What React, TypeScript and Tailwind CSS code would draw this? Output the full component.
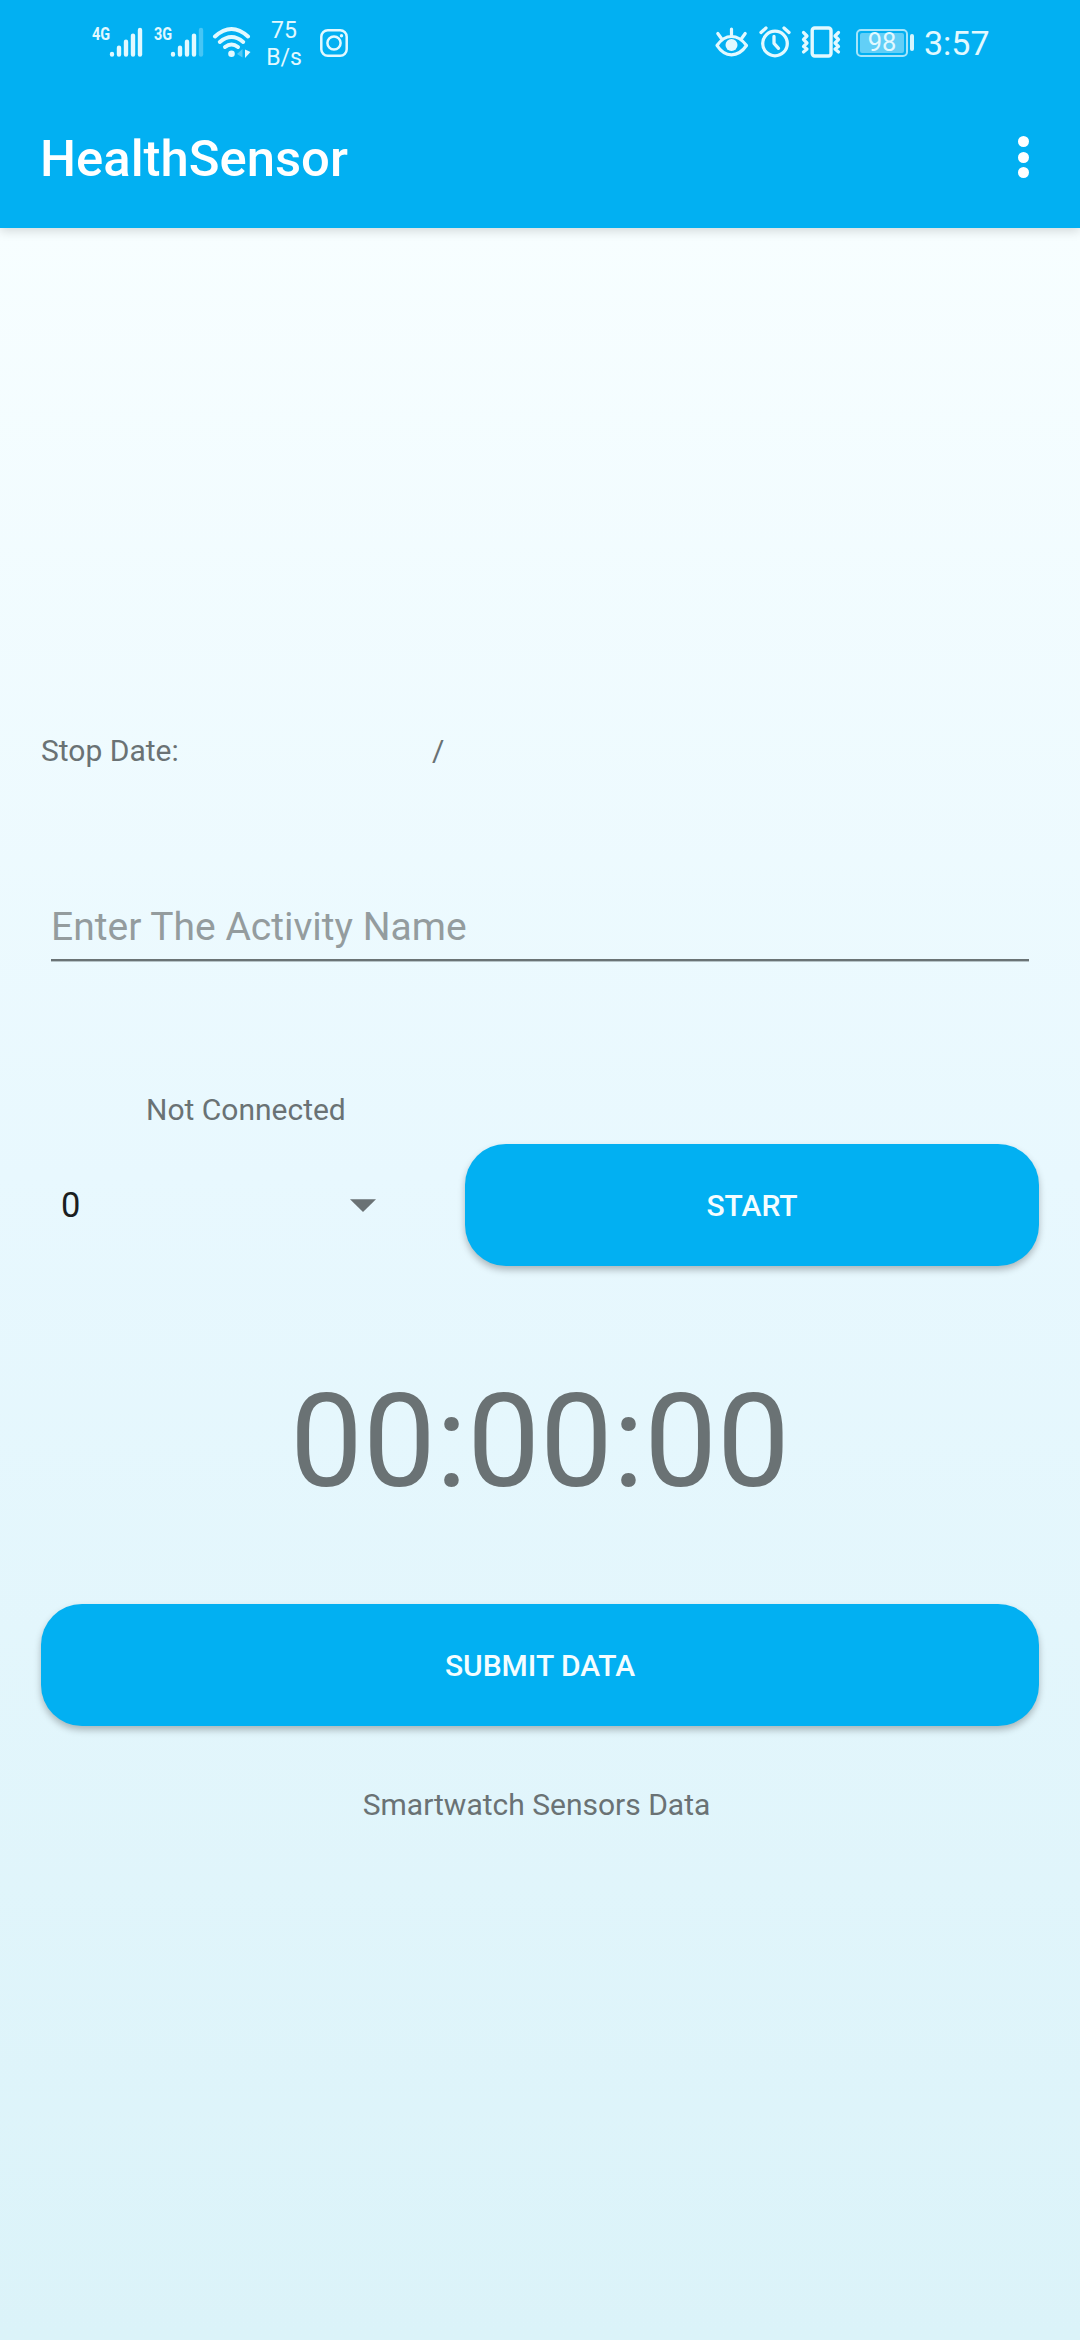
import React from "react";

const ICE = "#e2f9ff";

function SignalBars({ faded = false }: { faded?: boolean }) {
  return (
    <svg className="h-[32px] w-[34px]" viewBox="0 0 34 32" stroke={ICE} strokeWidth="4.4" strokeLinecap="round">
      <path d="M3 28v.6M10 21.800v6.800M17 15.800v12.800M24 9.600v19" />
      <path d="M31 4v24.600" opacity={faded ? 0.3 : 1} />
    </svg>
  );
}

function Wifi() {
  return (
    <svg className="h-[34px] w-[40px]" viewBox="0 0 40 34" fill="none" stroke={ICE} strokeWidth="4" strokeLinecap="round">
      <path d="M3 11.500Q19.500-3.500 36 11.500" />
      <path d="M7.800 17Q19.500 7 31.200 17" />
      <path d="M13 22Q19.500 17 26 22" />
      <circle cx="19.500" cy="28.700" r="3.300" fill={ICE} stroke="none" />
      <path d="M30.500 24v8.500L25 29z" fill={ICE} stroke="none" opacity=".35" />
      <path d="M33 24.500v8.500l5.500-6z" fill={ICE} stroke="none" />
    </svg>
  );
}

function Camera() {
  return (
    <svg className="h-[28px] w-[28px]" viewBox="0 0 28 28" fill="none" stroke={ICE} strokeWidth="2.500">
      <rect x="1.300" y="1.300" width="25.400" height="25.400" rx="6.500" />
      <circle cx="14" cy="14" r="6.600" />
      <circle cx="21.500" cy="6.800" r="1.700" fill={ICE} stroke="none" />
    </svg>
  );
}

function Eye() {
  return (
    <svg className="h-[30px] w-[34px]" viewBox="0 0 34 30" fill="none" stroke={ICE} strokeWidth="3.200" strokeLinecap="round">
      <path d="M2 18.500Q8 9.500 16.500 9.500T31.500 18.500Q25 27.800 16.500 27.800T2 18.500z" strokeLinejoin="round" />
      <circle cx="16.500" cy="18" r="6" fill={ICE} stroke="none" />
      <path d="M16.500 2v6M2.800 6.500l3.600 5M30.200 6.500l-3.600 5" />
    </svg>
  );
}

function Alarm() {
  return (
    <svg className="h-[32px] w-[32px]" viewBox="0 0 32 32" fill="none" stroke={ICE} strokeWidth="3.300" strokeLinecap="round">
      <circle cx="16" cy="17.500" r="12.300" />
      <path d="M15 10.500v6.800l4.500 5" strokeLinejoin="round" />
      <path d="M2 6.500l5-4.500M30 6.500l-5-4.500" />
    </svg>
  );
}

function Vibrate() {
  return (
    <svg className="h-[32px] w-[40px]" viewBox="0 0 40 32" fill="none" stroke={ICE} strokeWidth="3.400" strokeLinecap="round" strokeLinejoin="round">
      <rect x="11.200" y="2" width="18.800" height="28" rx="2.500" />
      <path d="M2.500 6.500l3.500 3.500-3.500 3.500 3.500 3.500-3.500 3.500 3.500 2.500-3.500 3" strokeWidth="3.200" />
      <path d="M37.500 6.500l-3.500 3.500 3.500 3.500-3.500 3.500 3.500 3.500-3.500 2.500 3.500 3" strokeWidth="3.200" />
    </svg>
  );
}

function StatusBar() {
  return (
    <div className="flex h-[84px] items-start text-[#e2f9ff]">
      <span className="mt-[25px] ml-[92px] w-[18px] origin-left scale-x-[.78] text-[18.500px] leading-[18px] font-bold">4G</span>
      <div className="mt-[26px] -ml-px h-[32px]"><SignalBars /></div>
      <span className="mt-[25px] ml-[11px] w-[18px] origin-left scale-x-[.78] text-[18.500px] leading-[18px] font-bold">3G</span>
      <div className="mt-[26px] -ml-[2px] h-[32px]"><SignalBars faded /></div>
      <div className="mt-[25px] ml-[8px]"><Wifi /></div>
      <div className="mt-[17px] ml-[14px] w-[36px] text-center text-[23px] leading-[27px]">
        <div>75</div>
        <div>B/s</div>
      </div>
      <div className="mt-[29px] ml-[18px]"><Camera /></div>
      <div className="mt-[27px] ml-[367px]"><Eye /></div>
      <div className="mt-[26px] ml-[10px]"><Alarm /></div>
      <div className="mt-[26px] ml-[10px]"><Vibrate /></div>
      <div className="mt-[29px] ml-[15px] flex h-[28px] w-[52px] rounded-[5px] border-2 border-[#a5e5fb] p-[2px]">
        <div className="flex flex-1 items-center justify-center rounded-[2px] bg-[#62cff7] text-[25.500px] leading-none">98</div>
      </div>
      <div className="mt-[34px] ml-[2px] h-[17px] w-[4px] rounded-full bg-[#d5f5fe]" />
      <span className="mt-[23px] ml-[10px] text-[34px] leading-[40px]">3:57</span>
    </div>
  );
}

function Toolbar() {
  return (
    <div className="flex h-[144px] items-start justify-between pr-[51px] pl-[40px]">
      <h1 className="mt-[45px] text-[50.800px] leading-[60px] font-medium text-white">HealthSensor</h1>
      <button aria-label="More options" className="mt-[52px] flex flex-col gap-[4.500px]">
        <span className="size-[11px] rounded-full bg-white" />
        <span className="size-[11px] rounded-full bg-white" />
        <span className="size-[11px] rounded-full bg-white" />
      </button>
    </div>
  );
}

const button =
  "flex h-[122px] items-center justify-center rounded-[41px] bg-[#02b0f2] pt-[2px] text-[30px] leading-[34px] font-medium text-[#f4fdff] shadow-[0_4px_7px_rgba(0,0,0,0.26)]";

export default function App() {
  return (
    <div className="flex h-[2340px] w-[1080px] flex-col bg-[#02b0f2] font-['Roboto',sans-serif]">
      <header className="relative shadow-[0_3px_10px_rgba(0,0,0,0.15)]">
        <StatusBar />
        <Toolbar />
      </header>
      <main className="flex flex-1 flex-col bg-linear-to-b from-[#f7feff] via-[#e8f8fe] via-45% to-[#dbf3f9] px-[41px] text-[30px] leading-[34px] text-[#6a7274]">
        <div className="mt-[506px] flex">
          <span className="w-[391px]">Stop Date:</span>
          <span>/</span>
        </div>
        <input
          placeholder="Enter The Activity Name"
          className="mx-[10px] mt-[132px] h-[61px] border-b-2 border-[#6a7375] bg-transparent pb-[6px] text-[39px] shadow-[0_1px_0_#b5c3c7] outline-none placeholder:text-[#949c9e]"
        />
        <div className="mt-[132px] ml-[105px]">Not Connected</div>
        <div className="mt-[17px] flex">
          <div className="flex h-[122px] w-[335px] items-center justify-between pl-[20px] text-[34.500px] text-[#1b1e1f]">
            <span>0</span>
            <svg className="h-[13px] w-[26px]" viewBox="0 0 26 13"><path d="M0 .3h26L13 13z" fill="#6a7274" /></svg>
          </div>
          <button className={button + " ml-[89px] flex-1"}>START</button>
        </div>
        <div className="mt-[101px] text-center text-[129.600px] leading-[150px]">00:00:00</div>
        <button className={button + " mt-[87px]"}>SUBMIT DATA</button>
        <div className="mt-[62px] pr-[7px] text-center">Smartwatch Sensors Data</div>
      </main>
    </div>
  );
}
